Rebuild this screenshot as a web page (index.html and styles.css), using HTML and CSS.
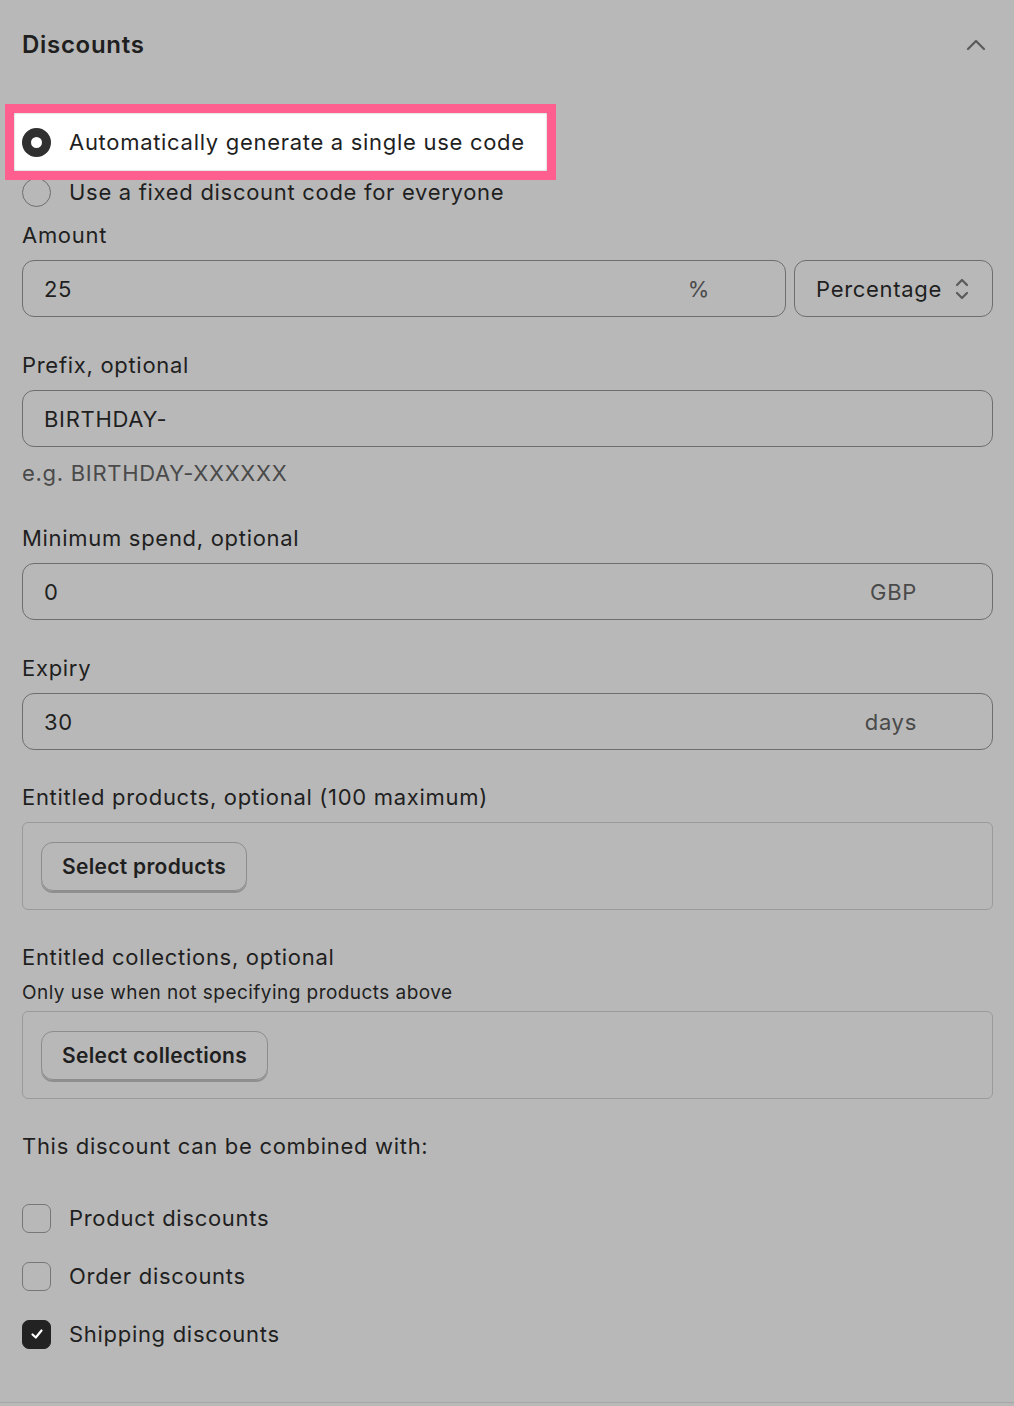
FILE: index.html
```html
<!DOCTYPE html>
<html lang="en">
<head>
    <meta charset="UTF-8">
    <meta name="viewport" content="width=device-width, initial-scale=1.0">
    <title>Discounts</title>
    <link rel="stylesheet" href="styles.css">
</head>
<body>
    <section class="panel">
        <header class="panel-head">
            <h2>Discounts</h2>
            <svg class="chevron" width="22" height="14" viewBox="0 0 22 14" aria-hidden="true">
                <path d="M3 11 L11 3 L19 11" fill="none" stroke="#5a5a5a" stroke-width="2.2" stroke-linecap="round" stroke-linejoin="round"/>
            </svg>
        </header>

        <div class="choices">
            <label class="choice highlight">
                <span class="radio checked"></span>
                <span class="choice-text">Automatically generate a single use code</span>
            </label>
            <label class="choice">
                <span class="radio"></span>
                <span class="choice-text">Use a fixed discount code for everyone</span>
            </label>
        </div>

        <div class="field field-first">
            <div class="label">Amount</div>
            <div class="row">
                <div class="input grow">
                    <span class="value">25</span>
                    <span class="suffix">%</span>
                </div>
                <div class="input select">
                    <span class="value">Percentage</span>
                    <svg width="16" height="26" viewBox="0 0 16 26" aria-hidden="true">
                        <path d="M3 9 L8 4 L13 9 M3 17 L8 22 L13 17" fill="none" stroke="#5a5a5a" stroke-width="2.2" stroke-linecap="round" stroke-linejoin="round"/>
                    </svg>
                </div>
            </div>
        </div>

        <div class="field">
            <div class="label">Prefix, optional</div>
            <div class="input"><span class="value">BIRTHDAY-</span></div>
            <div class="help">e.g. BIRTHDAY-XXXXXX</div>
        </div>

        <div class="field">
            <div class="label">Minimum spend, optional</div>
            <div class="input">
                <span class="value">0</span>
                <span class="suffix">GBP</span>
            </div>
        </div>

        <div class="field">
            <div class="label">Expiry</div>
            <div class="input">
                <span class="value">30</span>
                <span class="suffix">days</span>
            </div>
        </div>

        <div class="field field-tight">
            <div class="label">Entitled products, optional (100 maximum)</div>
            <div class="picker">
                <button class="btn">Select products</button>
            </div>
        </div>

        <div class="field field-tight">
            <div class="label">Entitled collections, optional</div>
            <div class="note">Only use when not specifying products above</div>
            <div class="picker">
                <button class="btn">Select collections</button>
            </div>
        </div>

        <div class="field field-tight">
            <div class="label">This discount can be combined with:</div>
            <ul class="checks">
                <li><span class="box"></span>Product discounts</li>
                <li><span class="box"></span>Order discounts</li>
                <li><span class="box checked">
                    <svg width="16" height="16" viewBox="0 0 16 16" aria-hidden="true">
                        <path d="M3.5 8.5 L6.8 11.5 L12.5 4.5" fill="none" stroke="#fff" stroke-width="2.2" stroke-linecap="round" stroke-linejoin="round"/>
                    </svg>
                </span>Shipping discounts</li>
            </ul>
        </div>
    </section>
</body>
</html>
```

FILE: styles.css
```css
*{
    margin: 0;
    padding: 0;
    box-sizing: border-box;
}
:root{
    --fundo:#b8b8b8;
    --texto:#1f1f1f;
    --suave:#4a4a4a;
    --borda:#6e6e6e;
    --rosa:#ff5f8f;
}
html, body{
    background-color: var(--fundo);
    color: var(--texto);
    font-family: Inter, "Noto Sans", sans-serif;
    font-size: 22px;
    letter-spacing: 0.7px;
    height: 100%;
}
.panel{
    min-height: 1403px;
    padding: 30px 21px 0 22px;
    border-bottom: 1px solid #a6a6a6;
}
.panel-head{
    display: flex;
    justify-content: space-between;
    align-items: center;
    height: 30px;
}
.panel-head h2{
    font-size: 24px;
    font-weight: 600;
    line-height: 30px;
}
.chevron{
    margin-right: 6px;
}
.choices{
    display: flex;
    flex-direction: column;
    gap: 22px;
    margin-top: 68px;
}
.choice{
    display: flex;
    align-items: center;
    gap: 18px;
    height: 28px;
    width: fit-content;
    line-height: 28px;
}
.highlight{
    position: relative;
}
.highlight::before{
    content: '';
    position: absolute;
    top: -24px;
    bottom: -24px;
    left: -17px;
    right: -31px;
    background: #fff;
    border: 9px solid var(--rosa);
    box-shadow: inset 0 0 2px rgba(0, 0, 0, 0.35);
}
.highlight > *{
    position: relative;
}
.radio{
    width: 29px;
    height: 29px;
    border-radius: 50%;
    border: 1px solid var(--borda);
    flex: none;
}
.radio.checked{
    border: 9px solid #303030;
    background: #fff;
}
.field{
    margin-top: 34px;
}
.field-first{
    margin-top: 15px;
}
.field-tight{
    margin-top: 33px;
}
.label{
    line-height: 28px;
    margin-bottom: 11px;
}
.row{
    display: flex;
    gap: 8px;
}
.input{
    height: 57px;
    border: 1px solid var(--borda);
    border-radius: 12px;
    display: flex;
    align-items: center;
    justify-content: space-between;
    padding: 0 75px 0 21px;
}
.grow{
    flex: auto;
}
.select{
    width: 199px;
    flex: none;
    padding: 0 22px 0 21px;
}
.suffix{
    color: var(--suave);
}
.help{
    color: var(--suave);
    line-height: 28px;
    margin-top: 12px;
    padding-bottom: 3px;
}
.note{
    font-size: 19px;
    letter-spacing: 0.45px;
    line-height: 24px;
    margin-top: -1px;
    margin-bottom: 6px;
}
.picker{
    border: 1px solid #9a9a9a;
    border-radius: 6px;
    height: 88px;
    padding: 19px 18px;
}
.btn{
    font: 600 21px Inter, "Noto Sans", sans-serif;
    letter-spacing: 0.3px;
    color: var(--texto);
    background: transparent;
    height: 49px;
    padding: 0 20px;
    border: 1.5px solid #8c8c8c;
    border-radius: 12px;
    box-shadow: 0 2px 0 #8f8f8f;
}
.checks{
    list-style: none;
    margin-top: 44px;
}
.checks li{
    display: flex;
    align-items: center;
    gap: 18px;
    height: 28px;
    margin-bottom: 30px;
}
.box{
    width: 29px;
    height: 29px;
    border: 1.5px solid #777;
    border-radius: 7px;
    flex: none;
    display: grid;
    place-items: center;
}
.box.checked{
    background: #222;
    border-color: #222;
}
```
